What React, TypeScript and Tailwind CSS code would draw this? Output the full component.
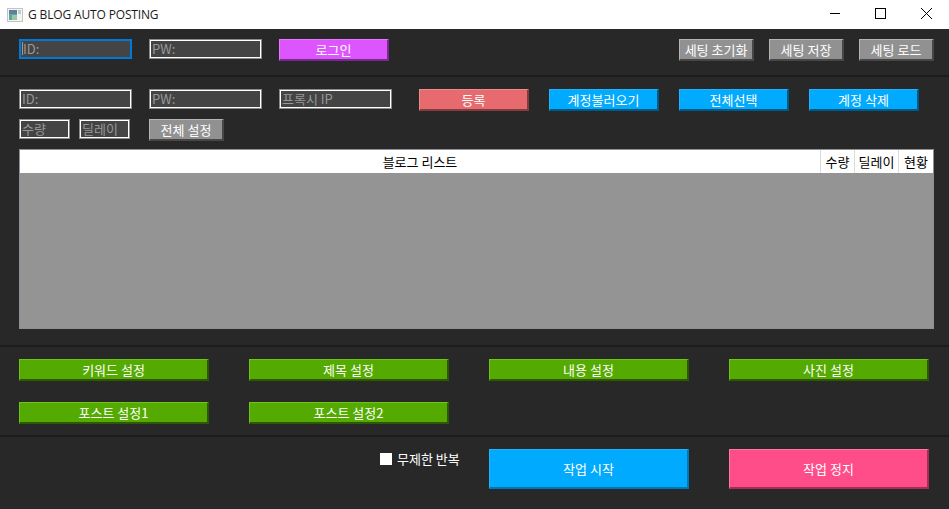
import React from 'react';

const FONT = "font-['Noto_Sans_CJK_KR','Noto_Sans',sans-serif]";

const Field: React.FC<{ label: string; className: string; focused?: boolean }> = ({ label, className, focused }) => (
  <div
    className={`h-5 flex items-center pb-[1px] bg-[#444444] text-[13px] leading-none text-[#989898] ${
      focused ? 'pl-[1px] border-2 border-[#0078d7]' : 'pl-[2px] border border-[#8a8a8a] shadow-[inset_0_0_0_1px_#ffffff]'
    } ${className}`}
  >
    {focused && <span className="w-[1px] h-[13px] bg-[#9a9a9a]" />}
    {label}
  </div>
);

const Btn: React.FC<{ label: string; className: string }> = ({ label, className }) => (
  <button
    className={`flex items-center justify-center shrink-0 text-white text-[13px] leading-none border border-b-2 border-r-2 ${className}`}
  >
    {label}
  </button>
);

const gray = 'w-[75px] h-[22px] bg-[#919191] border-t-[#b5b5b5] border-l-[#b5b5b5] border-r-[#474747] border-b-[#474747]';
const blue = 'w-[110px] h-[22px] bg-[#00aaff] border-t-[#22b4ff] border-l-[#22b4ff] border-r-[#005a88] border-b-[#005a88]';
const green = 'h-[22px] bg-[#55aa00] border-t-[#6fc41a] border-l-[#6fc41a] border-r-[#2d5a00] border-b-[#2d5a00]';

const Divider = () => <div className="h-[2px] bg-[#1c1c1c] shrink-0" />;

const TitleBar = () => (
  <div className="h-[29px] bg-white flex items-center shrink-0 font-['Open_Sans',sans-serif]">
    <svg width="16" height="16" viewBox="0 0 16 16" className="ml-[7px] mr-[5px] shrink-0">
      <rect x="0.5" y="1.5" width="15" height="13" fill="#f4f4f4" stroke="#c4c4c4" />
      <rect x="2" y="3" width="8" height="10" fill="#5fa5a8" />
      <rect x="2" y="3" width="8" height="4" fill="#5f7f9a" />
      <rect x="5" y="8" width="5" height="5" fill="#9cc89c" />
      <rect x="11" y="3" width="3" height="4" fill="#b4d2d2" />
    </svg>
    <span className="text-[12px] leading-none tracking-[-0.15px] text-[#1a1a1a]">G BLOG AUTO POSTING</span>
    <div className="ml-auto flex h-full items-center text-black">
      <svg width="46" height="29" viewBox="0 0 46 29">
        <path d="M19 13.5h10" stroke="#000" fill="none" />
      </svg>
      <svg width="46" height="29" viewBox="0 0 46 29">
        <rect x="18.5" y="8.5" width="10" height="10" stroke="#000" fill="none" />
      </svg>
      <svg width="46" height="29" viewBox="0 0 46 29">
        <path d="M18 8l11 11M29 8l-11 11" stroke="#000" fill="none" />
      </svg>
    </div>
  </div>
);

export default function App() {
  return (
    <div className={`w-[949px] h-[509px] overflow-hidden flex flex-col bg-[#282828] ${FONT}`}>
      <TitleBar />

      {/* login row */}
      <div className="h-[46px] shrink-0 flex items-start pt-[10px] pl-[19px] pr-[15px]">
        <Field label="ID:" focused className="w-[113px]" />
        <Field label="PW:" className="w-[113px] ml-[17px]" />
        <Btn
          label="로그인"
          className="w-[110px] h-[22px] ml-[17px] bg-[#dd55ff] border-t-[#e57aff] border-l-[#e57aff] border-r-[#7a2a8e] border-b-[#7a2a8e]"
        />
        <div className="ml-auto flex gap-[15px]">
          <Btn label="세팅 초기화" className={gray} />
          <Btn label="세팅 저장" className={gray} />
          <Btn label="세팅 로드" className={gray} />
        </div>
      </div>
      <Divider />

      {/* account section */}
      <div className="h-[268px] shrink-0 flex flex-col pt-[12px] pl-[19px] pr-[15px]">
        <div className="flex items-start">
          <Field label="ID:" className="w-[113px]" />
          <Field label="PW:" className="w-[113px] ml-[17px]" />
          <Field label="프록시 IP" className="w-[113px] ml-[17px]" />
          <Btn
            label="등록"
            className="w-[110px] h-[22px] ml-[27px] bg-[#e76b6e] border-t-[#ee8a8c] border-l-[#ee8a8c] border-r-[#843c3e] border-b-[#843c3e]"
          />
          <Btn label="계정불러오기" className={`${blue} ml-[20px]`} />
          <Btn label="전체선택" className={`${blue} ml-[20px]`} />
          <Btn label="계정 삭제" className={`${blue} ml-[20px]`} />
        </div>
        <div className="flex items-start mt-[8px]">
          <Field label="수량" className="w-[51px]" />
          <Field label="딜레이" className="w-[51px] ml-[9px]" />
          <Btn label="전체 설정" className={`${gray} ml-[19px]`} />
        </div>

        <div className="mt-[8px] h-[180px] border border-[#8f8f9a] bg-[#949494] flex flex-col">
          <div className="h-[23px] bg-white flex text-[13px] leading-none text-black shrink-0">
            <div className="flex-1 flex items-center justify-center border-r border-[#dcdcdc]">블로그 리스트</div>
            <div className="w-[34px] flex items-center justify-center border-r border-[#dcdcdc]">수량</div>
            <div className="w-[44px] flex items-center justify-center border-r border-[#dcdcdc]">딜레이</div>
            <div className="w-[34px] flex items-center justify-center">현황</div>
          </div>
        </div>
      </div>
      <Divider />

      {/* settings buttons */}
      <div className="h-[88px] shrink-0 grid grid-cols-[190px_200px_200px_200px] gap-x-[40px] gap-y-[21px] content-start pt-[12px] pl-[19px]">
        <Btn label="키워드 설정" className={green} />
        <Btn label="제목 설정" className={green} />
        <Btn label="내용 설정" className={green} />
        <Btn label="사진 설정" className={green} />
        <Btn label="포스트 설정1" className={green} />
        <Btn label="포스트 설정2" className={green} />
      </div>
      <Divider />

      {/* start / stop */}
      <div className="flex-1 flex items-start pt-[12px] pl-[380px]">
        <div className="flex items-center mt-[2px] h-[16px] w-[109px]">
          <span className="w-[12px] h-[12px] bg-white shrink-0" />
          <span className="ml-[5px] mb-[2px] text-[13px] leading-none text-white whitespace-nowrap">무제한 반복</span>
        </div>
        <Btn
          label="작업 시작"
          className="w-[200px] h-[40px] bg-[#00aaff] border-t-[#22b4ff] border-l-[#22b4ff] border-r-[#0078b5] border-b-[#0078b5]"
        />
        <Btn
          label="작업 정지"
          className="w-[200px] h-[40px] ml-[40px] bg-[#ff4d8a] border-t-[#ff77a6] border-l-[#ff77a6] border-r-[#a32e58] border-b-[#a32e58]"
        />
      </div>
    </div>
  );
}
